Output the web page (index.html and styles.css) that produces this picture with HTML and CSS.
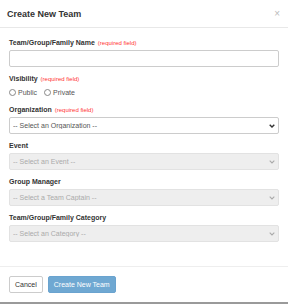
FILE: index.html
```html
<!DOCTYPE html>
<html lang="en">
<head>
  <meta charset="UTF-8">
  <meta name="viewport" content="width=device-width, initial-scale=1">
  <title>Create New Team</title>
  <link rel="stylesheet" href="styles.css">
</head>
<body>

  <div class="modal">
    <div class="modal-header">
      <h4 class="modal-title">Create New Team</h4>
      <button type="button" class="close">&times;</button>
    </div>

    <form class="modal-body">
      <div class="form-group">
        <label for="teamName">Team/Group/Family Name <span class="req">(required field)</span></label>
        <input type="text" id="teamName" class="form-control">
      </div>

      <div class="form-group">
        <label>Visibility <span class="req">(required field)</span></label>
        <div class="radios">
          <label class="radio"><input type="radio" name="visibility"> Public</label>
          <label class="radio"><input type="radio" name="visibility"> Private</label>
        </div>
      </div>

      <div class="form-group">
        <label for="org">Organization <span class="req">(required field)</span></label>
        <div class="select-wrap">
          <select id="org" class="form-control">
            <option>-- Select an Organization --</option>
          </select>
          <svg class="chevron" width="6" height="4" viewBox="0 0 6 4"><path d="M0.7 0.7 L3 3 L5.3 0.7" fill="none" stroke="#333" stroke-width="1.4"/></svg>
        </div>
      </div>

      <div class="form-group">
        <label for="event">Event</label>
        <div class="select-wrap">
          <select id="event" class="form-control" disabled>
            <option>-- Select an Event --</option>
          </select>
          <svg class="chevron" width="6" height="4" viewBox="0 0 6 4"><path d="M0.7 0.7 L3 3 L5.3 0.7" fill="none" stroke="#aaa" stroke-width="1.1"/></svg>
        </div>
      </div>

      <div class="form-group">
        <label for="manager">Group Manager</label>
        <div class="select-wrap">
          <select id="manager" class="form-control" disabled>
            <option>-- Select a Team Captain --</option>
          </select>
          <svg class="chevron" width="6" height="4" viewBox="0 0 6 4"><path d="M0.7 0.7 L3 3 L5.3 0.7" fill="none" stroke="#aaa" stroke-width="1.1"/></svg>
        </div>
      </div>

      <div class="form-group">
        <label for="category">Team/Group/Family Category</label>
        <div class="select-wrap">
          <select id="category" class="form-control" disabled>
            <option>-- Select an Category --</option>
          </select>
          <svg class="chevron" width="6" height="4" viewBox="0 0 6 4"><path d="M0.7 0.7 L3 3 L5.3 0.7" fill="none" stroke="#aaa" stroke-width="1.1"/></svg>
        </div>
      </div>
    </form>

    <div class="modal-footer">
      <button type="button" class="btn btn-default">Cancel</button>
      <button type="button" class="btn btn-primary">Create New Team</button>
    </div>
  </div>

</body>
</html>
```

FILE: styles.css
```css
/* Basic Reset */
* {
  box-sizing: border-box;
  margin: 0;
  padding: 0;
}

body {
  font-family: "Liberation Sans", Arial, sans-serif;
  background-color: #fff;
  color: #333;
}

.modal {
  width: 288px;
  height: 304px;
  border-bottom: 2px solid #9a9a9a;
  background-color: #fff;
}

.modal-header {
  height: 28px;
  padding: 0 7px;
  border-bottom: 1px solid #e8e8e8;
  display: flex;
  align-items: center;
  justify-content: space-between;
}

.modal-title {
  font-size: 9px;
  font-weight: bold;
  color: #333;
}

.close {
  border: none;
  background: none;
  color: #bbb;
  font-size: 10px;
  line-height: 1;
  margin-right: 1px;
  font-family: "Liberation Sans", Arial, sans-serif;
}

.modal-body {
  padding: 10px 9px 17px;
}

.form-group {
  margin-bottom: 7px;
}

.form-group > label {
  display: block;
  height: 10px;
  line-height: 10px;
  margin-bottom: 2px;
  font-size: 7px;
  font-weight: bold;
  color: #333;
}

.req {
  font-size: 6px;
  font-weight: normal;
  color: #f33;
  margin-left: 1px;
}

.form-control {
  display: block;
  width: 100%;
  height: 17px;
  padding: 0 3px;
  border: 1px solid #ccc;
  border-radius: 2px;
  background-color: #fff;
  font-family: "Liberation Sans", Arial, sans-serif;
  font-size: 7px;
  color: #555;
  outline: none;
}

select.form-control {
  appearance: none;
  -webkit-appearance: none;
}

select.form-control:disabled {
  background-color: #eee;
  border-color: #e2e2e2;
  color: #aaa;
  opacity: 1;
}

.select-wrap {
  position: relative;
}

.chevron {
  position: absolute;
  right: 4px;
  top: 7px;
}

.radios {
  display: flex;
  align-items: center;
  gap: 7px;
  height: 12px;
}

.radio {
  display: flex;
  align-items: center;
  gap: 2px;
  font-size: 7px;
  color: #555;
}

.radio input {
  appearance: none;
  -webkit-appearance: none;
  width: 7px;
  height: 7px;
  border: 1px solid #888;
  border-radius: 50%;
  background: #fff;
  margin: 0;
}

.modal-footer {
  border-top: 1px solid #eee;
  padding: 9px 9px;
  display: flex;
  gap: 5px;
}

.btn {
  height: 17px;
  padding: 0 5px;
  border-radius: 2px;
  font-family: "Liberation Sans", Arial, sans-serif;
  font-size: 7px;
  cursor: pointer;
}

.btn-default {
  background-color: #fff;
  border: 1px solid #ccc;
  color: #333;
}

.btn-primary {
  background-color: #6fa8d2;
  border: 1px solid #6aa3cf;
  color: #fff;
}
```
